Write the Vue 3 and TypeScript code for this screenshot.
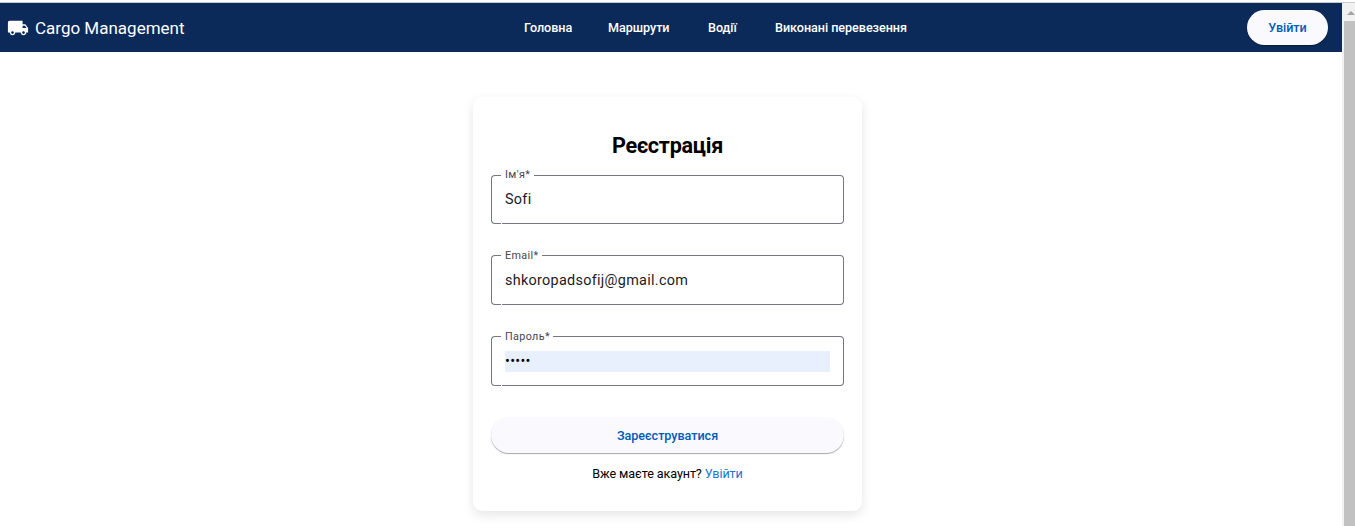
<script setup lang="ts">
interface NavItem {
  id: string
  label: string
}

interface Field {
  id: string
  label: string
  value: string
  type: 'text' | 'password'
}

const navItems: NavItem[] = [
  { id: 'home', label: 'Головна' },
  { id: 'routes', label: 'Маршрути' },
  { id: 'drivers', label: 'Водії' },
  { id: 'done', label: 'Виконані перевезення' },
]

const fields: Field[] = [
  { id: 'name', label: "Ім'я*", value: 'Sofi', type: 'text' },
  { id: 'email', label: 'Email*', value: 'shkoropadsofij@gmail.com', type: 'text' },
  { id: 'password', label: 'Пароль*', value: '•••••', type: 'password' },
]
</script>

<template>
  <div class="window">
    <div class="viewport">
      <header class="toolbar">
        <div class="brand">
          <svg class="truck" viewBox="0 0 24 24" aria-hidden="true">
            <path d="M20 8h-3V4H3c-1.1 0-2 .9-2 2v11h2c0 1.66 1.34 3 3 3s3-1.34 3-3h6c0 1.66 1.34 3 3 3s3-1.34 3-3h2v-5l-3-4zM6 18.5c-.83 0-1.5-.67-1.5-1.5s.67-1.5 1.5-1.5 1.5.67 1.5 1.5-.67 1.5-1.5 1.5zm13.5-9l1.96 2.5H17V9.5h2.5zm-1.5 9c-.83 0-1.5-.67-1.5-1.5s.67-1.5 1.5-1.5 1.5.67 1.5 1.5-.67 1.5-1.5 1.5z" />
          </svg>
          <span class="brand-name">Cargo Management</span>
        </div>
        <nav class="nav">
          <a v-for="item in navItems" :key="item.id" :class="['nav-link', item.id]">{{ item.label }}</a>
        </nav>
        <button class="login" type="button">Увійти</button>
      </header>

      <main class="card">
        <h2 class="title">Реєстрація</h2>
        <div v-for="field in fields" :key="field.id" :class="['field', field.id]">
          <div class="outline">
            <span class="lead"></span>
            <span class="notch"><span class="label">{{ field.label }}</span></span>
            <span class="trail"></span>
          </div>
          <div :class="['value', field.type]">{{ field.value }}</div>
        </div>
        <button class="submit" type="button">Зареєструватися</button>
        <p class="hint">Вже маєте акаунт? <a class="hint-link">Увійти</a></p>
      </main>
    </div>
    <div class="scrollbar">
      <span class="arrow"></span>
      <span class="thumb"></span>
    </div>
  </div>
</template>

<style>
body {
  margin: 0;
  overflow: hidden;
}
</style>

<style scoped>
.window {
  display: flex;
  box-sizing: border-box;
  width: 1355px;
  height: 526px;
  padding-top: 2px;
  background: #fff;
  font-family: Roboto, sans-serif;
  overflow: hidden;
}

.viewport {
  width: 1342px;
  border-top: 1px solid #c9cbc9;
}

.toolbar {
  display: flex;
  align-items: center;
  box-sizing: border-box;
  width: 1342px;
  height: 49px;
  padding: 0 14px 0 7px;
  background: #0b2a59;
  color: #fff;
}

.brand {
  display: flex;
  align-items: center;
  width: 517px;
}

.truck {
  width: 22px;
  height: 22px;
  fill: #fff;
}

.brand-name {
  margin-left: 6px;
  padding-top: 1px;
  font-size: 17px;
  line-height: 24px;
  white-space: nowrap;
}

.nav {
  display: flex;
  flex: 1;
}

.nav-link {
  font-size: 12.6px;
  font-weight: 500;
  line-height: 18px;
  letter-spacing: -0.04px;
  white-space: nowrap;
}

.home {
  width: 84px;
}

.routes {
  width: 100px;
}

.drivers {
  width: 67px;
}

.login,
.submit {
  margin: 0;
  padding: 0;
  border: 0;
  background: #faf9fd;
  color: #005cbb;
  font-family: inherit;
  font-size: 12.6px;
  font-weight: 500;
  letter-spacing: -0.04px;
  box-shadow: 0 1px 1px rgba(0, 0, 0, 0.35);
}

.login {
  width: 81px;
  height: 35px;
  border-radius: 18px;
}

.card {
  box-sizing: border-box;
  width: 389px;
  height: 414px;
  margin: 45px 0 0 473px;
  padding: 34px 18px 0;
  border-radius: 9px;
  background: #fff;
  box-shadow: 0 4px 11px rgba(0, 0, 0, 0.1);
}

.title {
  height: 30px;
  margin: 0 0 14px;
  font-size: 21.6px;
  font-weight: 700;
  line-height: 30px;
  letter-spacing: -0.25px;
  text-align: center;
}

.field {
  position: relative;
  box-sizing: border-box;
  width: 353px;
  height: 50px;
  margin-bottom: 31px;
}

.field.name {
  height: 49px;
}

.outline {
  position: absolute;
  inset: 0;
  display: flex;
}

.lead,
.notch,
.trail {
  box-sizing: border-box;
  border: 0 solid #74777f;
}

.lead {
  width: 10px;
  border-width: 1px 0 1px 1px;
  border-radius: 4px 0 0 4px;
}

.notch {
  width: 33px;
  margin-left: 1px;
  padding-left: 3px;
  border-bottom-width: 1px;
}

.email .notch {
  width: 40px;
}

.password .notch {
  width: 51px;
}

.name .notch {
  width: 32px;
}

.trail {
  flex: 1;
  border-width: 1px 1px 1px 0;
  border-radius: 0 4px 4px 0;
}

.label {
  display: block;
  height: 15px;
  margin-top: -7px;
  color: #44474e;
  font-size: 10.8px;
  line-height: 15px;
  letter-spacing: 0.35px;
  white-space: nowrap;
}

.name .label {
  margin-top: -8px;
}

.value {
  position: absolute;
  top: 15px;
  left: 14px;
  width: 325px;
  height: 21px;
  color: #1a1b1f;
  font-size: 14.4px;
  line-height: 22px;
  letter-spacing: 0.3px;
}

.name .value {
  top: 14px;
}

.value.password {
  background: #e8f0fe;
  color: #000;
  line-height: 21px;
}

.submit {
  display: block;
  width: 353px;
  height: 36px;
  border-radius: 18px;
}

.hint {
  margin: 12px 0 0;
  font-size: 12.6px;
  line-height: 18px;
  letter-spacing: -0.1px;
  text-align: center;
}

.hint-link {
  color: #1976d2;
}

.scrollbar {
  display: flex;
  flex-direction: column;
  align-items: flex-start;
  box-sizing: border-box;
  width: 13px;
  padding-left: 2px;
  border-top: 1px solid #c9cbc9;
  background: #f1f1f1;
}

.arrow {
  width: 0;
  height: 0;
  margin: 8px 0 6px 3px;
  border-right: 4px solid transparent;
  border-bottom: 4px solid #a3a3a3;
  border-left: 4px solid transparent;
}

.thumb {
  flex: 1;
  width: 11px;
  background: #c1c1c1;
}
</style>
